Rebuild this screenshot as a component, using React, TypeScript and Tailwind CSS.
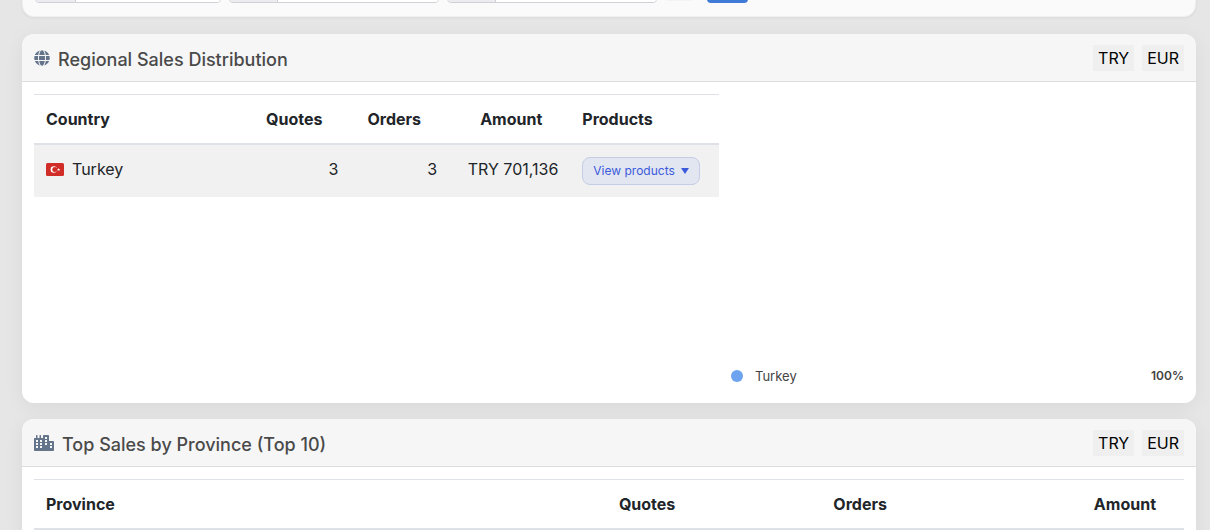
import type { ReactNode } from "react";
import { FaCity, FaGlobe } from "react-icons/fa";

function CurrencyButton({ code }: { code: string }) {
  return (
    <button type="button" className="bg-[#efefef] px-[5px] py-px text-base leading-6 text-black">
      {code}
    </button>
  );
}

function Panel({ icon, title, children }: { icon: ReactNode; title: string; children: ReactNode }) {
  return (
    <section className="overflow-hidden rounded-xl bg-white shadow-[0_4px_20px_rgba(0,0,0,0.06)]">
      <header className="flex h-12 items-center justify-between border-b border-[#dddddd] bg-[#f6f6f6] px-3">
        <h2 className="flex items-baseline gap-2 pt-1 text-lg leading-6 font-medium text-[#4a4a4a]">
          {icon}
          {title}
        </h2>
        <div className="flex gap-2">
          <CurrencyButton code="TRY" />
          <CurrencyButton code="EUR" />
        </div>
      </header>
      <div className="p-3">{children}</div>
    </section>
  );
}

function TurkeyFlag() {
  return (
    <svg viewBox="0 0 18 13" className="h-[13px] w-[18px]" aria-hidden="true">
      <rect width="18" height="13" rx="1.5" fill="#d02c28" />
      <circle cx="7.8" cy="6.5" r="3.2" fill="#fff" />
      <circle cx="8.8" cy="6.5" r="2.5" fill="#d02c28" />
      <path
        d="M12.6 4.9l.4 1.1 1.2.1-.9.7.3 1.2-1-.7-1 .7.3-1.2-.9-.7 1.2-.1z"
        fill="#fff"
      />
    </svg>
  );
}

function FilterField({ label, width, addon }: { label: string; width: string; addon: string }) {
  return (
    <div className={`flex h-9 overflow-hidden rounded border border-[#cfd1d6] bg-white ${width}`}>
      <span className={`shrink-0 border-r border-[#cfd1d6] bg-[#ebebf0] ${addon}`} />
      <input aria-label={label} className="min-w-0 flex-1 bg-white" />
    </div>
  );
}

const headCell = "border-y border-t-[#dee2e6] border-b-2 border-b-[#dee2e6] py-3 pl-3 font-bold";

export default function App() {
  return (
    <main className="flow-root min-h-screen overflow-hidden bg-[#e6e6e6] pr-3.5 pl-[22px] font-['Inter','Liberation_Sans',sans-serif] text-base leading-6 text-[#212529]">
      <form className="-mt-12 mb-[17px] flex items-end gap-2 rounded-xl border border-[#f0f0f0] bg-[#fafafa] px-3 pt-3.5 pb-[13px] shadow-[0_1px_3px_rgba(0,0,0,0.06)]">
        <FilterField label="Period" width="w-[186px]" addon="w-10" />
        <FilterField label="Start date" width="w-[210px]" addon="w-12" />
        <FilterField label="End date" width="w-[210px]" addon="w-12" />
        <button type="reset" aria-label="Reset" className="mb-0.5 h-8 w-7 rounded bg-[#f3f3f3]" />
        <button type="submit" aria-label="Apply" className="ml-1.5 h-9 w-[41px] rounded bg-[#3f7ad6]" />
      </form>

      <div className="flex flex-col gap-4">
        <Panel icon={<FaGlobe className="size-4 text-[#64748b]" />} title="Regional Sales Distribution">
          <div className="grid grid-cols-[685fr_453fr] gap-3">
            <div>
              <table className="w-full table-fixed border-collapse">
                <colgroup>
                  <col className="w-[32%]" />
                  <col className="w-[14.2%]" />
                  <col className="w-[14.4%]" />
                  <col className="w-[17.7%]" />
                  <col className="w-[21.7%]" />
                </colgroup>
                <thead>
                  <tr>
                    <th className={`${headCell} pr-3 text-left`}>Country</th>
                    <th className={`${headCell} pr-7 text-right`}>Quotes</th>
                    <th className={`${headCell} pr-7 text-right`}>Orders</th>
                    <th className={`${headCell} pr-7 text-right`}>Amount</th>
                    <th className={`${headCell} pr-3 text-left`}>Products</th>
                  </tr>
                </thead>
                <tbody>
                  <tr className="bg-[#f1f1f1] align-top">
                    <td className="p-3">
                      <span className="flex items-center gap-2">
                        <TurkeyFlag />
                        Turkey
                      </span>
                    </td>
                    <td className="p-3 text-right">3</td>
                    <td className="p-3 text-right">3</td>
                    <td className="p-3 text-right whitespace-nowrap">TRY 701,136</td>
                    <td className="p-3">
                      <button
                        type="button"
                        className="flex h-7 items-center gap-1.5 rounded-lg border border-[#c5cde6] bg-[#e2e6f1] px-2.5 text-xs whitespace-nowrap text-[#3b5bdb]"
                      >
                        View products
                        <svg viewBox="0 0 8 6" className="h-1.5 w-2" aria-hidden="true">
                          <path d="M0 0h8L4 6z" fill="currentColor" />
                        </svg>
                      </button>
                    </td>
                  </tr>
                </tbody>
              </table>
            </div>
            <div className="flex min-h-[297px] flex-col justify-end">
              <div className="flex items-center py-[5px] text-[13px] leading-5 text-[#444444]">
                <span className="mr-3 size-3 rounded-full bg-[#6ea3f0]" />
                <span>Turkey</span>
                <span className="ml-auto text-xs leading-5 font-semibold">100%</span>
              </div>
            </div>
          </div>
        </Panel>

        <Panel icon={<FaCity className="h-4 w-5 text-[#64748b]" />} title="Top Sales by Province (Top 10)">
          <table className="w-full table-fixed border-collapse">
            <colgroup>
              <col className="w-[35%]" />
              <col className="w-[23.2%]" />
              <col className="w-[18.4%]" />
              <col className="w-[23.4%]" />
            </colgroup>
            <thead>
              <tr>
                <th className={`${headCell} pr-3 text-left`}>Province</th>
                <th className={`${headCell} pr-7 text-right`}>Quotes</th>
                <th className={`${headCell} pr-7 text-right`}>Orders</th>
                <th className={`${headCell} pr-7 text-right`}>Amount</th>
              </tr>
            </thead>
          </table>
        </Panel>
      </div>
    </main>
  );
}
